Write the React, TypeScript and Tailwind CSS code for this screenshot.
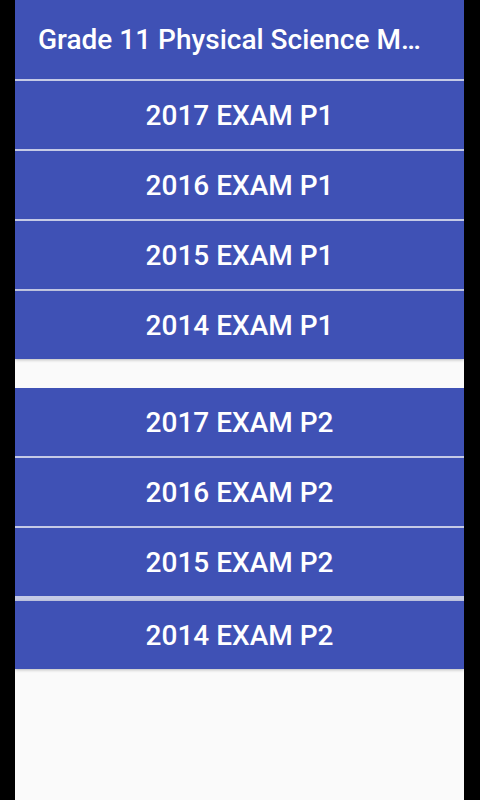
const paperOne = ['2017 EXAM P1', '2016 EXAM P1', '2015 EXAM P1', '2014 EXAM P1'];
const paperTwo = ['2017 EXAM P2', '2016 EXAM P2', '2015 EXAM P2', '2014 EXAM P2'];

function ExamButton({ label, last }: { label: string; last?: boolean }) {
  return (
    <button
      className={`h-[68px] w-full bg-[#3f51b5] text-white text-[28px] font-medium flex items-center justify-center pt-[2px] ${
        last ? 'shadow-[0_1px_3px_rgba(0,0,0,0.25)]' : ''
      }`}
    >
      {label}
    </button>
  );
}

export default function App() {
  return (
    <div className="h-[800px] w-full bg-black pl-[15px] pr-[16px]" style={{ fontFamily: 'Roboto, "Noto Sans", sans-serif' }}>
      <div className="h-full bg-[#fafafa] flex flex-col">
        <div className="flex flex-col gap-[2px] bg-[#c5cae6]">
          {/* title bar */}
          <div className="h-[79px] bg-[#3f51b5] flex items-center pl-[23px] pr-[20px]">
            <h1 className="text-white text-[28px] font-medium whitespace-nowrap">Grade 11 Physical Science M…</h1>
          </div>
          {paperOne.map((p, i) => (
            <ExamButton key={p} label={p} last={i === paperOne.length - 1} />
          ))}
        </div>

        <div className="h-[29px]" />

        <div className="flex flex-col gap-[2px] bg-[#c5cae6]">
          {paperTwo.map((p, i) => (
            <div key={p} className={i === 3 ? 'pt-[3px]' : ''}>
              <ExamButton label={p} last={i === paperTwo.length - 1} />
            </div>
          ))}
        </div>
      </div>
    </div>
  );
}
